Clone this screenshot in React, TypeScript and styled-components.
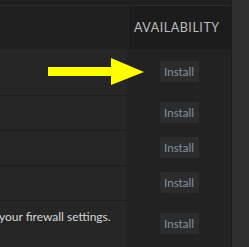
import styled, { createGlobalStyle } from "styled-components";

const GlobalStyle = createGlobalStyle`
    html, body {
        margin: 0;
        padding: 0;
        background: #222222;
    }
    body {
        font-family: Lato, "Open Sans", sans-serif;
    }
`

interface Row {
    height: number;
    text?: string;
}

const rows: Row[] = [
    { height: 46 },
    { height: 34 },
    { height: 34 },
    { height: 34 },
    { height: 46, text: "your firewall settings." },
]

function Arrow() {
    return (
        <ArrowSvg width="100" height="30" viewBox="46 56 100 30">
            <rect x="48" y="67" width="64" height="9" fill="#ffff00" />
            <polygon points="111,58 144,72 111,85" fill="#ffff00" />
        </ArrowSvg>
    )
}

function App() {
    return (
        <>
            <GlobalStyle />
            <Frame>
                <Main>
                    <TopStrip />
                    <Table>
                        <HeadCell />
                        <HeadCell $dark>AVAILABILITY</HeadCell>
                        {rows.map((row, i) => (
                            <RowGroup key={i}>
                                <NameCell $h={row.height} $last={i === rows.length - 1}>
                                    {row.text && <CellText>{row.text}</CellText>}
                                </NameCell>
                                <ActionCell $h={row.height} $last={i === rows.length - 1}>
                                    <InstallButton>Install</InstallButton>
                                </ActionCell>
                            </RowGroup>
                        ))}
                    </Table>
                    <Arrow />
                </Main>
                <ScrollTrack />
            </Frame>
        </>
    )
}

const Frame = styled.div`
    display: flex;
    width: 249px;
    height: 247px;
    overflow: hidden;
`

const Main = styled.div`
    position: relative;
    width: 231px;
    display: flex;
    flex-direction: column;
    background: #222222;
`

const TopStrip = styled.div`
    height: 6px;
    background: #1f1f1f;
    border-bottom: 1px solid #2b2b2b;
`

const Table = styled.div`
    display: grid;
    grid-template-columns: 127px 1fr;
    column-gap: 2px;
`

const HeadCell = styled.div<{ $dark?: boolean }>`
    height: 43px;
    display: flex;
    align-items: center;
    padding-left: 5px;
    background: ${p => p.$dark ? "#1c1c1c" : "#202020"};
    color: #bcbcbc;
    font-size: 12.5px;
    letter-spacing: 0.55px;
`

const RowGroup = styled.div`
    display: contents;
`

const NameCell = styled.div<{ $h: number; $last: boolean }>`
    height: ${p => p.$h}px;
    background: #262626;
    border-bottom: ${p => p.$last ? "none" : "1px solid #1d1d1d"};
    overflow: hidden;
`

const CellText = styled.div`
    margin: 8px 0 0 -1px;
    color: #d6d6d6;
    font-size: 12px;
    white-space: nowrap;
`

const ActionCell = styled.div<{ $h: number; $last: boolean }>`
    height: ${p => p.$h}px;
    border-bottom: 1px solid transparent;
    display: flex;
    align-items: ${p => p.$last ? "flex-start" : "center"};
    justify-content: center;
    padding-top: ${p => p.$last ? "12px" : "0"};
    box-sizing: border-box;
    margin-left: -2px;
`

const InstallButton = styled.button`
    width: 39px;
    height: 21px;
    padding: 0;
    border: none;
    border-radius: 1px;
    background: #2c2c2c;
    color: #8193a1;
    font-family: Lato, "Open Sans", sans-serif;
    font-size: 11.5px;
`

const ArrowSvg = styled.svg`
    position: absolute;
    left: 46px;
    top: 56px;
`

const ScrollTrack = styled.div`
    flex: 1;
    background: #2f2f2f;
    border-left: 1px solid #1c1c1c;
`

export default App;
